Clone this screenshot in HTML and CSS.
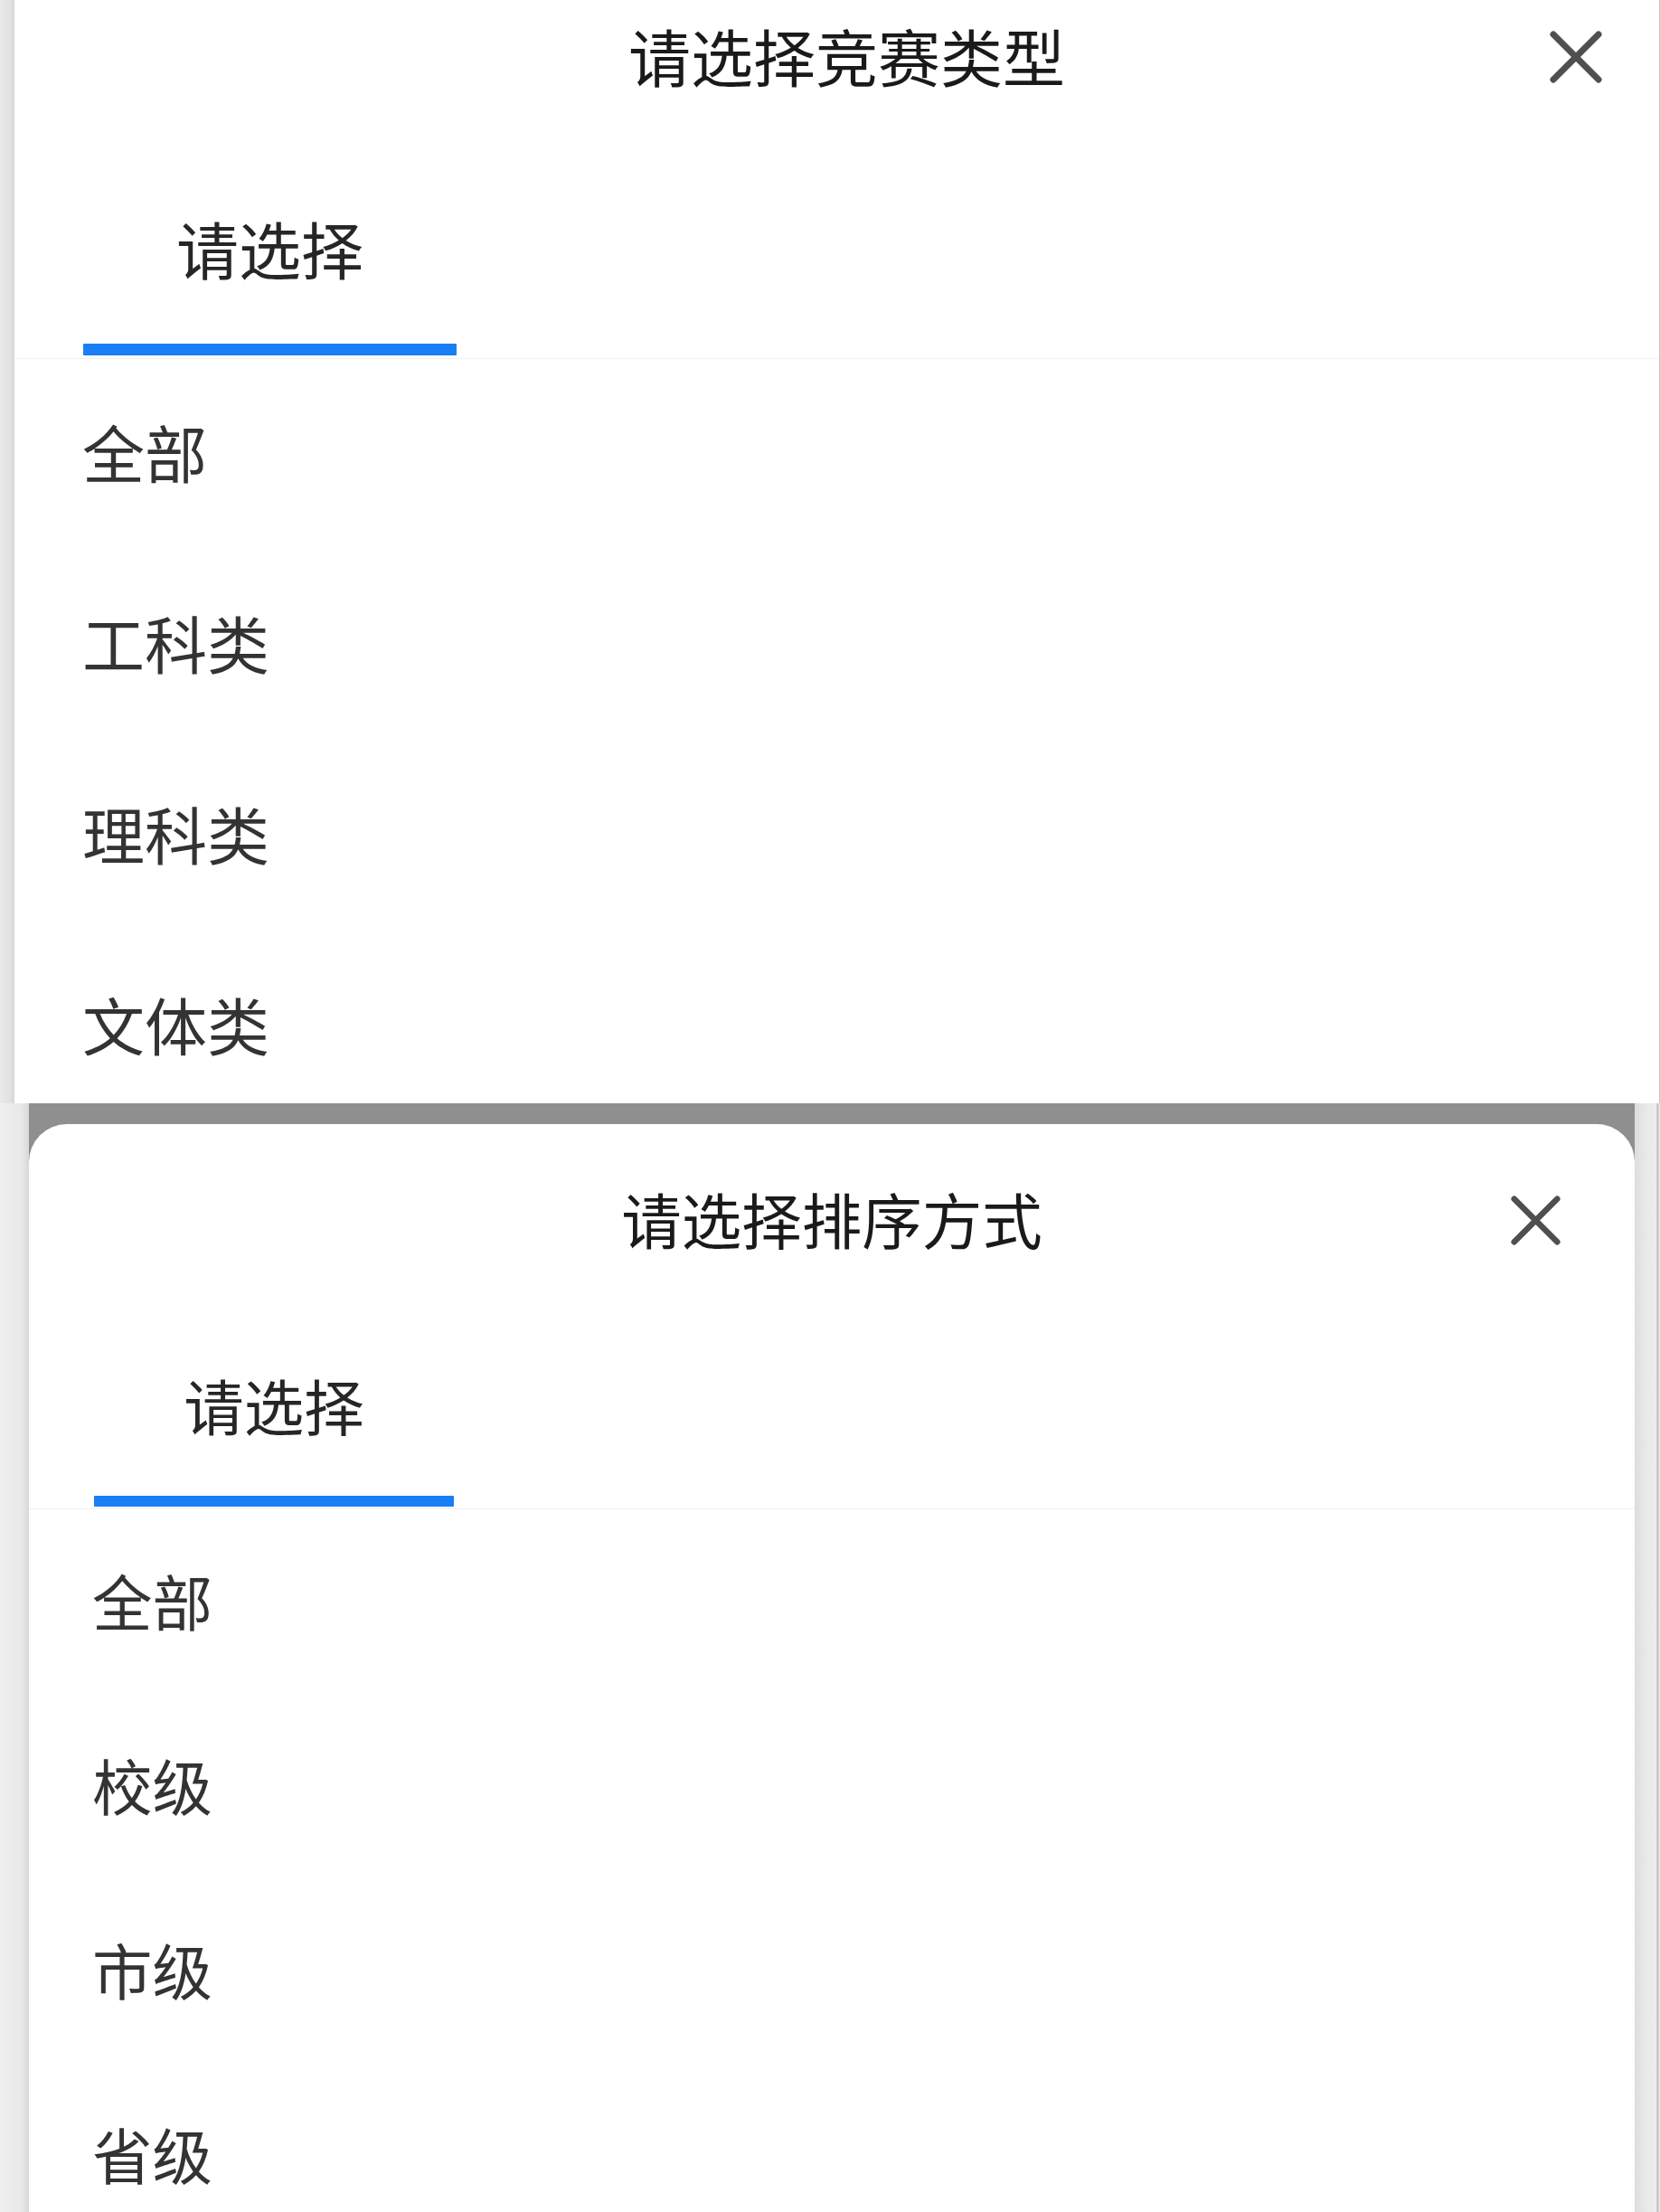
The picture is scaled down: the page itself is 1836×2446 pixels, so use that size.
FILE: index.html
```html
<!DOCTYPE html>
<html lang="zh-CN">
<head>
<meta charset="utf-8">
<title>请选择</title>
<link rel="stylesheet" href="styles.css">
</head>
<body>
<div class="screen screen-top">
  <div class="edge edge-left-top"></div>
  <div class="sheet sheet-top">
    <div class="header header-top">
      <div class="title">请选择竞赛类型</div>
      <svg class="close close-top" viewBox="0 0 60 60" width="60" height="60" aria-hidden="true">
        <line x1="5" y1="5" x2="55" y2="55"/>
        <line x1="55" y1="5" x2="5" y2="55"/>
      </svg>
    </div>
    <div class="tabs tabs-top">
      <div class="tab">
        <span class="tab-text">请选择</span>
        <span class="tab-line"></span>
      </div>
    </div>
    <div class="list list-top">
      <div class="item">全部</div>
      <div class="item">工科类</div>
      <div class="item">理科类</div>
      <div class="item">文体类</div>
    </div>
  </div>
</div>
<div class="screen screen-bottom">
  <div class="edge edge-left-bottom"></div>
  <div class="mask">
    <div class="sheet sheet-bottom">
      <div class="header header-bottom">
        <div class="title">请选择排序方式</div>
        <svg class="close close-bottom" viewBox="0 0 60 60" width="57" height="57" aria-hidden="true">
          <line x1="5" y1="5" x2="55" y2="55"/>
          <line x1="55" y1="5" x2="5" y2="55"/>
        </svg>
      </div>
      <div class="tabs tabs-bottom">
        <div class="tab">
          <span class="tab-text">请选择</span>
          <span class="tab-line"></span>
        </div>
      </div>
      <div class="list list-bottom">
        <div class="item">全部</div>
        <div class="item">校级</div>
        <div class="item">市级</div>
        <div class="item">省级</div>
      </div>
    </div>
  </div>
  <div class="edge edge-right-bottom"></div>
</div>
</body>
</html>
```
FILE: styles.css
```css
* { box-sizing: border-box; }

html, body {
  margin: 0;
  padding: 0;
}

body {
  width: 1836px;
  height: 2446px;
  overflow: hidden;
  background: #ececec;
  font-family: "Noto Sans CJK SC", "Noto Sans", sans-serif;
  color: #222;
}

.screen {
  display: flex;
  width: 1836px;
}

.screen-top {
  height: 1220px;
}

.screen-bottom {
  height: 1226px;
}

.edge-left-top {
  width: 16px;
  flex: none;
  background: linear-gradient(to right, #e9e9e9 0%, #e2e2e2 70%, #d6d6d6 100%);
}

.edge-left-bottom {
  width: 32px;
  flex: none;
  background: linear-gradient(to right, #f0f0f0 0%, #e8e8e8 75%, #d8d8d8 100%);
}

.edge-right-bottom {
  width: 28px;
  flex: none;
  background: linear-gradient(to right, #dcdcdc 0%, #e8e8e8 40%, #ededed 85%, #b9b9b9 89%, #f2f2f2 100%);
}

.sheet {
  position: relative;
  background: #fff;
  overflow: hidden;
}

.sheet-top {
  flex: 1;
  border-right: 1px solid #c9c9c9;
}

.mask {
  flex: 1;
  background: #8f8f8f;
  padding-top: 23px;
  display: flex;
  flex-direction: column;
}

.sheet-bottom {
  flex: 1;
  border-radius: 42px 42px 0 0;
}

.header {
  display: flex;
  align-items: center;
  justify-content: center;
}

.header-top {
  height: 122px;
  padding-left: 22px;
  font-size: 69px;
}

.header-bottom {
  height: 208px;
  font-size: 66.5px;
}

.title {
  line-height: 1;
  color: #1a1a1a;
  white-space: nowrap;
}

.close {
  position: absolute;
  stroke: #4f4f4f;
  stroke-linecap: round;
  fill: none;
}

.close line {
  stroke-width: 7;
}

.close-top {
  top: 33px;
  right: 62px;
}

.close-bottom {
  top: 78px;
  right: 81px;
}

.tabs {
  display: flex;
  align-items: flex-end;
  border-bottom: 1px solid #f0f0f0;
}

.tabs-top {
  height: 275px;
  padding-left: 76px;
  font-size: 69px;
}

.tabs-bottom {
  height: 218px;
  padding-left: 72px;
  font-size: 66.5px;
}

.tab {
  display: flex;
  flex-direction: column;
  align-items: center;
}

.tabs-top .tab { width: 413px; }
.tabs-bottom .tab { width: 398px; }

.tab-text {
  line-height: 1;
  color: #262626;
  white-space: nowrap;
}

.tab-line {
  display: block;
  width: 100%;
  background: #1a7ef4;
  border-radius: 1px;
}

.tabs-top .tab-text { margin-bottom: 71px; }
.tabs-top .tab-line { height: 13px; margin-bottom: 3px; }

.tabs-bottom .tab-text { margin-bottom: 68px; }
.tabs-bottom .tab-line { height: 12px; margin-bottom: 2px; }

.list {
  display: flex;
  flex-direction: column;
}

.item {
  display: flex;
  align-items: center;
  line-height: 1;
  color: #333;
  white-space: nowrap;
}

.list-top {
  padding-left: 75px;
  font-size: 69px;
}

.list-top .item {
  height: 211px;
  padding-bottom: 6px;
  flex: none;
}

.list-bottom {
  padding-left: 70px;
  font-size: 66.5px;
}

.list-bottom .item {
  height: 204px;
  padding-bottom: 3px;
  flex: none;
}
```
